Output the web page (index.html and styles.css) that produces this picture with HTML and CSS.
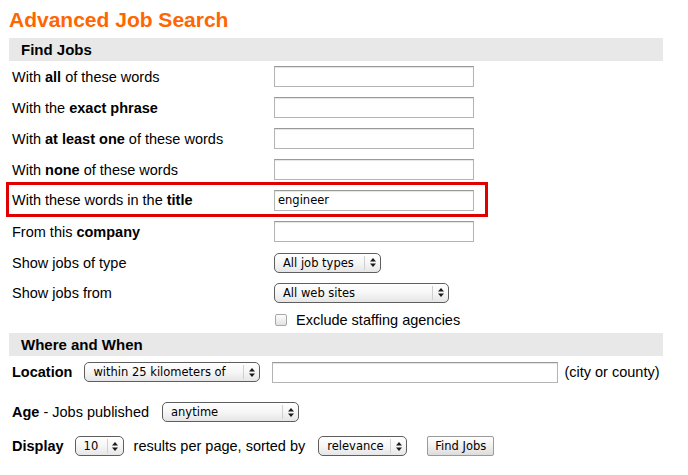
FILE: index.html
```html
<!DOCTYPE html>
<html lang="en">
  <head>
    <meta charset="UTF-8" />
    <meta name="viewport" content="width=device-width, initial-scale=1.0" />
    <title>Advanced Job Search</title>
    <link rel="stylesheet" href="styles.css">
  </head>
  <body>
    <div class="page">
      <h1>Advanced Job Search</h1>
      <form action="">
        <div class="bar">Find Jobs</div>

        <div class="row">
          <label class="lbl">With <b>all</b> of these words</label>
          <input type="text" class="txt" name="as_and" />
        </div>
        <div class="row">
          <label class="lbl">With the <b>exact phrase</b></label>
          <input type="text" class="txt" name="as_phr" />
        </div>
        <div class="row">
          <label class="lbl">With <b>at least one</b> of these words</label>
          <input type="text" class="txt" name="as_any" />
        </div>
        <div class="row">
          <label class="lbl">With <b>none</b> of these words</label>
          <input type="text" class="txt" name="as_not" />
        </div>
        <div class="row hl">
          <label class="lbl">With these words in the <b>title</b></label>
          <input type="text" class="txt" name="as_ttl" value="engineer" />
        </div>
        <div class="row">
          <label class="lbl">From this <b>company</b></label>
          <input type="text" class="txt" name="as_cmp" />
        </div>
        <div class="row">
          <label class="lbl">Show jobs of type</label>
          <span class="sel">
            <select class="w-type"><option>All job types</option></select>
            <span class="arr"><svg width="6" height="9" viewBox="0 0 6 9"><polygon points="0,3.5 3,0 6,3.5" /><polygon points="0,5.5 3,9 6,5.5" /></svg></span>
          </span>
        </div>
        <div class="row r-from">
          <label class="lbl">Show jobs from</label>
          <span class="sel">
            <select class="w-site"><option>All web sites</option></select>
            <span class="arr"><svg width="6" height="9" viewBox="0 0 6 9"><polygon points="0,3.5 3,0 6,3.5" /><polygon points="0,5.5 3,9 6,5.5" /></svg></span>
          </span>
        </div>
        <div class="row r-chk">
          <span class="lbl"></span>
          <label class="cb"><input type="checkbox" name="nosa" /> Exclude staffing agencies</label>
        </div>

        <div class="bar">Where and When</div>

        <div class="line l-loc">
          <b class="head">Location</b>
          <span class="sel">
            <select class="w-loc"><option>within 25 kilometers of</option></select>
            <span class="arr"><svg width="6" height="9" viewBox="0 0 6 9"><polygon points="0,3.5 3,0 6,3.5" /><polygon points="0,5.5 3,9 6,5.5" /></svg></span>
          </span>
          <input type="text" class="txt wide" name="l" />
          <span class="note">(city or county)</span>
        </div>
        <div class="line l-age">
          <span class="head"><b>Age</b> - Jobs published</span>
          <span class="sel">
            <select class="w-age"><option>anytime</option></select>
            <span class="arr"><svg width="6" height="9" viewBox="0 0 6 9"><polygon points="0,3.5 3,0 6,3.5" /><polygon points="0,5.5 3,9 6,5.5" /></svg></span>
          </span>
        </div>
        <div class="line l-disp">
          <b class="head">Display</b>
          <span class="sel">
            <select class="w-num"><option>10</option></select>
            <span class="arr"><svg width="6" height="9" viewBox="0 0 6 9"><polygon points="0,3.5 3,0 6,3.5" /><polygon points="0,5.5 3,9 6,5.5" /></svg></span>
          </span>
          <span class="mid">results per page, sorted by</span>
          <span class="sel">
            <select class="w-sort"><option>relevance</option></select>
            <span class="arr"><svg width="6" height="9" viewBox="0 0 6 9"><polygon points="0,3.5 3,0 6,3.5" /><polygon points="0,5.5 3,9 6,5.5" /></svg></span>
          </span>
          <button class="go">Find Jobs</button>
        </div>
      </form>
    </div>
  </body>
</html>
```

FILE: styles.css
```css
* {
  margin: 0;
  padding: 0;
  box-sizing: border-box;
}
body {
  font-family: "Liberation Sans", Arial, sans-serif;
  font-size: 14.5px;
  color: #000;
  background: #fff;
}
.page {
  width: 654px;
  margin-left: 9px;
  padding-top: 8px;
}
h1 {
  font-size: 21px;
  line-height: 24px;
  color: #ff6600;
  margin-bottom: 6px;
}
.bar {
  background: #e8e8e8;
  height: 23px;
  line-height: 23px;
  font-size: 15px;
  font-weight: bold;
  padding-left: 12px;
}
.row {
  display: flex;
  align-items: center;
  height: 31px;
  padding-left: 3px;
}
.row .lbl {
  width: 262px;
}
.row.hl {
  width: 482px;
  height: 35px;
  margin: -3px 0 -1px -3px;
  border: 3px solid #e00000;
  padding-left: 3px;
  padding-top: 1px;
}
.row.r-from {
  height: 29px;
}
.row.r-chk {
  height: 26px;
}
.txt {
  width: 200px;
  height: 21px;
  border: 1px solid #b4b4b4;
  border-top-color: #999;
  box-shadow: inset 0 1px 1px #e4e4e4;
  padding: 0 3px;
  font-family: "DejaVu Sans", sans-serif;
  font-size: 11.5px;
  color: #000;
  outline: none;
}
.txt.wide {
  width: 286px;
  margin: 0 6px 0 12px;
}
.sel {
  position: relative;
  display: inline-block;
  height: 20px;
}
.sel select {
  appearance: none;
  -webkit-appearance: none;
  display: block;
  height: 20px;
  border: 1px solid #5e5e5e;
  border-radius: 5px;
  background: linear-gradient(#ffffff, #f6f6f6 50%, #e6e6e6);
  font-family: "DejaVu Sans", sans-serif;
  font-size: 11.5px;
  color: #000;
  padding: 0 20px 0 8px;
  outline: none;
}
.sel .arr {
  position: absolute;
  top: 3px;
  right: 1px;
  bottom: 3px;
  width: 16px;
  border-left: 1px solid #d0d0d0;
  display: flex;
  align-items: center;
  justify-content: center;
  pointer-events: none;
}
.sel .arr svg {
  fill: #1a1a1a;
}
.w-type {
  width: 107px;
}
.w-site {
  width: 175px;
}
.w-loc {
  width: 176px;
}
.w-age {
  width: 137px;
}
.w-num {
  width: 49px;
}
.w-sort {
  width: 89px;
}
.cb {
  display: flex;
  align-items: center;
  gap: 9px;
  padding-left: 1px;
}
.cb input {
  appearance: none;
  -webkit-appearance: none;
  width: 12px;
  height: 12px;
  border: 1px solid #a8a8a8;
  border-radius: 2px;
  background: linear-gradient(#fdfdfd, #e2e2e2);
}
.line {
  display: flex;
  align-items: center;
  padding-left: 3px;
}
.l-loc .head {
  margin-right: 12px;
}
.l-age .head {
  margin-right: 13px;
}
.l-disp .head {
  margin-right: 11px;
}
.l-loc {
  height: 32px;
}
.l-age {
  height: 24px;
  margin-top: 12px;
}
.l-disp {
  height: 24px;
  margin-top: 10px;
}
.mid {
  margin: 0 13px 0 10px;
}
.go {
  margin-left: 20px;
  width: 67px;
  height: 20px;
  border: 1px solid #9a9a9a;
  border-radius: 2px;
  background: linear-gradient(#ffffff, #f0f0f0 50%, #dcdcdc);
  font-family: "DejaVu Sans", sans-serif;
  font-size: 11.5px;
  color: #000;
}
```
